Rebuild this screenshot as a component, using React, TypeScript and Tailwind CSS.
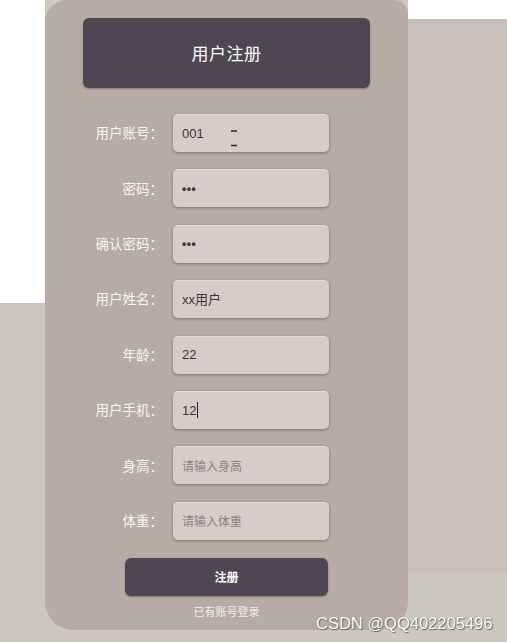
import React from 'react';

interface FieldProps {
  label: string;
  value?: string;
  placeholder?: string;
  password?: boolean;
  caret?: boolean;
  ibeam?: boolean;
}

const Field: React.FC<FieldProps> = ({ label, value, placeholder, password, caret, ibeam }) => {
  return (
    <div className="flex items-center h-[38px]">
      <label className="w-[118px] text-right text-[13.5px] text-[#f7f4f1] leading-none">{label}</label>
      <div className="relative ml-[10px] w-[156px] h-[38px] rounded-[5px] bg-[#d6cdc8] shadow-[0_1px_3px_rgba(60,45,40,0.45)] border-t border-[#e2dbd6] flex items-center pl-[9px] text-[13px] text-[#3b3634] font-['Liberation_Sans','Noto_Sans_CJK_SC',sans-serif]">
        {password ? (
          <span className="tracking-[0.5px] text-[12px] font-bold">•••</span>
        ) : value ? (
          <span>{value}</span>
        ) : (
          <span className="text-[12px] text-[#8c8480] font-['Noto_Sans_CJK_SC',sans-serif]">{placeholder}</span>
        )}
        {caret && <span className="ml-[1px] w-px h-[16px] bg-[#222]" />}
        {ibeam && (
          <svg className="absolute left-[57px] top-[15px]" width="8" height="18" viewBox="0 0 8 18">
            <path d="M1 1h6M1 15.5h6" stroke="#2f2b29" strokeWidth="1.4" />
          </svg>
        )}
      </div>
    </div>
  );
};

export default function App() {
  return (
    <div className="w-[507px] h-[642px] overflow-hidden relative flex bg-[#cdc8bd] font-['Noto_Sans_CJK_SC',sans-serif]">
      {/* left strip */}
      <div className="w-[45px] flex flex-col">
        <div className="h-[303px] bg-white" />
        <div className="flex-1 bg-[#ccc7bd]" />
      </div>

      {/* card */}
      <div className="w-[363px] h-[630px] bg-[#b6aca5] rounded-tl-[22px] rounded-tr-[14px] rounded-b-[28px] flex flex-col items-center pt-[18px]">
        <div className="w-[287px] h-[70px] rounded-[6px] bg-[#4c4751] shadow-[0_1px_2px_rgba(0,0,0,0.3)] flex items-center justify-center">
          <h3 className="text-[17px] text-white tracking-[0.5px]">用户注册</h3>
        </div>

        <div className="mt-[26px] self-start flex flex-col gap-[17.4px]">
          <Field label="用户账号：" value="001" ibeam />
          <Field label="密码：" password />
          <Field label="确认密码：" password />
          <Field label="用户姓名：" value="xx用户" />
          <Field label="年龄：" value="22" />
          <Field label="用户手机：" value="12" caret />
          <Field label="身高：" placeholder="请输入身高" />
          <Field label="体重：" placeholder="请输入体重" />
        </div>

        <button className="mt-[18px] w-[203px] h-[38px] rounded-[6px] bg-[#4c4751] text-white text-[12px] font-bold shadow-[0_1px_2px_rgba(0,0,0,0.3)]">
          注册
        </button>
        <span className="mt-[7px] text-[11px] text-[#f2eeea]">已有账号登录</span>
      </div>

      {/* right strip */}
      <div className="flex-1 flex flex-col">
        <div className="h-[19px] bg-white" />
        <div className="h-[556px] bg-[#c8c0ba]" />
        <div className="flex-1 bg-[#cdc8bd]" />
      </div>

      <span className="absolute left-[316px] top-[611px] text-[16.5px] text-white font-['Liberation_Sans',sans-serif] [text-shadow:0_0_1px_#6b6660,1px_1px_1px_#6b6660]">
        CSDN @QQ402205496
      </span>
    </div>
  );
}
